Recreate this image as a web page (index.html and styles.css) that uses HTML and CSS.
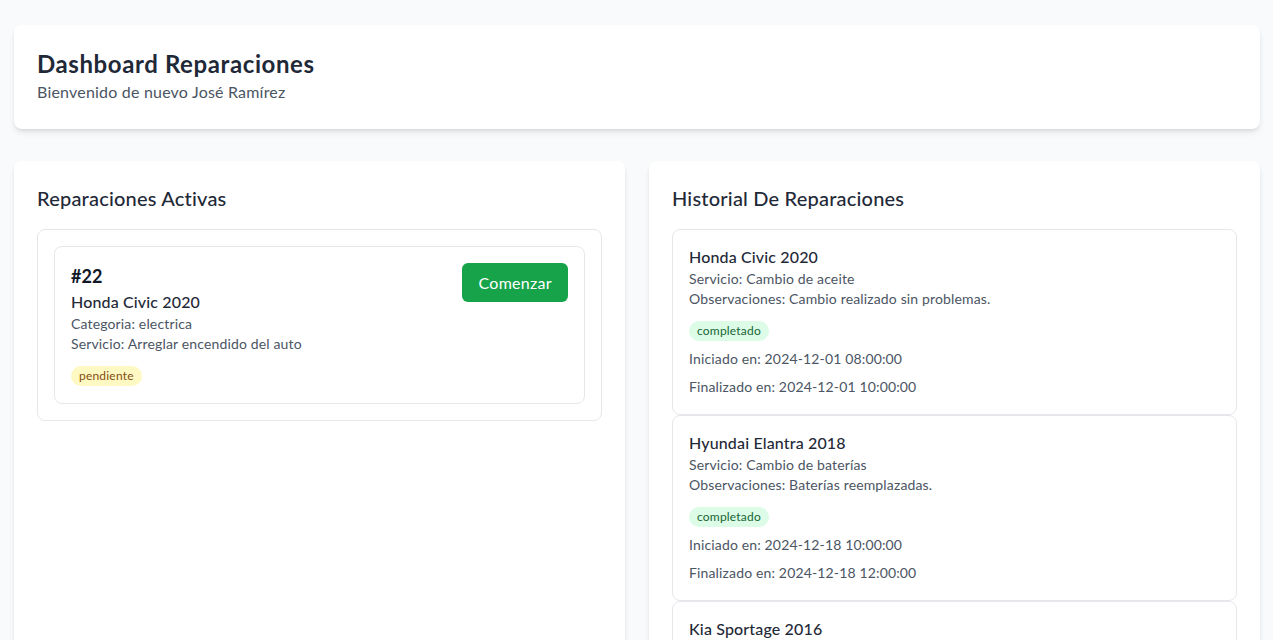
FILE: index.html
```html
<!DOCTYPE html>
<html lang="es">
<head>
<meta charset="utf-8">
<title>Dashboard Reparaciones</title>
<link rel="stylesheet" href="styles.css">
</head>
<body>
<div class="page">
  <header class="header card">
    <h1 class="title">Dashboard Reparaciones</h1>
    <p class="subtitle">Bienvenido de nuevo José Ramírez</p>
  </header>
  <main class="grid">
    <section class="card panel">
      <h2 class="panel-title">Reparaciones Activas</h2>
      <div class="active-list">
        <div class="active-item">
          <div class="active-info">
            <div class="num">#22</div>
            <div class="car">Honda Civic 2020</div>
            <div class="meta">Categoria: electrica</div>
            <div class="meta">Servicio: Arreglar encendido del auto</div>
            <span class="badge badge-yellow">pendiente</span>
          </div>
          <button class="btn">Comenzar</button>
        </div>
      </div>
    </section>
    <section class="card panel">
      <h2 class="panel-title">Historial De Reparaciones</h2>
      <div class="history">
        <div class="hist-item">
          <div class="car">Honda Civic 2020</div>
          <div class="meta">Servicio: Cambio de aceite</div>
          <div class="meta">Observaciones: Cambio realizado sin problemas.</div>
          <span class="badge badge-green">completado</span>
          <div class="meta date">Iniciado en: 2024-12-01 08:00:00</div>
          <div class="meta date">Finalizado en: 2024-12-01 10:00:00</div>
        </div>
        <div class="hist-item">
          <div class="car">Hyundai Elantra 2018</div>
          <div class="meta">Servicio: Cambio de baterías</div>
          <div class="meta">Observaciones: Baterías reemplazadas.</div>
          <span class="badge badge-green">completado</span>
          <div class="meta date">Iniciado en: 2024-12-18 10:00:00</div>
          <div class="meta date">Finalizado en: 2024-12-18 12:00:00</div>
        </div>
        <div class="hist-item">
          <div class="car">Kia Sportage 2016</div>
          <div class="meta">Servicio: Cambio de frenos</div>
          <div class="meta">Observaciones: Frenos nuevos instalados.</div>
          <span class="badge badge-green">completado</span>
          <div class="meta date">Iniciado en: 2024-12-20 09:00:00</div>
          <div class="meta date">Finalizado en: 2024-12-20 11:00:00</div>
        </div>
      </div>
    </section>
  </main>
</div>
</body>
</html>
```

FILE: styles.css
```css
* { box-sizing: border-box; }
html, body { margin: 0; padding: 0; }
body {
  background: #f9fafb;
  font-family: "Lato", "Noto Sans", sans-serif;
  color: #1f2937;
}
.page {
  padding: 25px 13px 24px 14px;
}
.card {
  background: #fff;
  border-radius: 8px;
  box-shadow: 0 4px 6px -1px rgba(0,0,0,0.1), 0 2px 4px -2px rgba(0,0,0,0.1);
}
.header {
  padding: 23px 23px 25px;
  margin-bottom: 32px;
}
.title {
  margin: 0;
  font-size: 24px;
  line-height: 32px;
  font-weight: 700;
  letter-spacing: 0.6px;
  color: #1f2937;
}
.subtitle {
  margin: 0;
  font-size: 16px;
  line-height: 24px;
  letter-spacing: 0.2px;
  color: #4b5563;
}
.grid {
  display: grid;
  grid-template-columns: 1fr 1fr;
  gap: 24px;
  align-items: start;
}
.panel {
  padding: 23px 23px 24px;
  min-height: 600px;
}
.panel-title {
  margin: 0 0 17px;
  font-size: 20px;
  line-height: 28px;
  font-weight: 500;
  letter-spacing: 0.2px;
  color: #1f2937;
}
.active-list {
  border: 1px solid #e5e7eb;
  border-radius: 8px;
  padding: 16px;
}
.active-item {
  border: 1px solid #e5e7eb;
  border-radius: 8px;
  padding: 15px 16px 17px;
  display: flex;
  justify-content: space-between;
  align-items: flex-start;
}
.active-info { display: flex; flex-direction: column; align-items: flex-start; }
.num {
  font-size: 18px;
  line-height: 28px;
  font-weight: 700;
  color: #111827;
}
.car {
  font-size: 16px;
  line-height: 24px;
  font-weight: 500;
  letter-spacing: 0.15px;
  color: #1f2937;
}
.meta {
  font-size: 14px;
  line-height: 20px;
  letter-spacing: 0.15px;
  color: #4b5563;
}
.badge {
  display: inline-block;
  margin-top: 12px;
  padding: 2px 8px;
  border-radius: 9999px;
  font-size: 12px;
  line-height: 16px;
  letter-spacing: 0.2px;
}
.badge-yellow { background: #fef9c3; color: #854d0e; }
.badge-green { background: #dcfce7; color: #166534; }
.btn {
  margin-top: 1px;
  background: #16a34a;
  color: #fff;
  border: none;
  border-radius: 6px;
  padding: 8px 16px 7px;
  font-family: inherit;
  font-size: 16px;
  line-height: 24px;
  letter-spacing: 0.3px;
  cursor: pointer;
}
.history {
  display: flex;
  flex-direction: column;
}
.hist-item {
  border: 1px solid #e5e7eb;
  border-radius: 8px;
  padding: 15px 16px 17px;
  display: flex;
  flex-direction: column;
  align-items: flex-start;
}
.hist-item .date { margin-top: 8px; }
```
